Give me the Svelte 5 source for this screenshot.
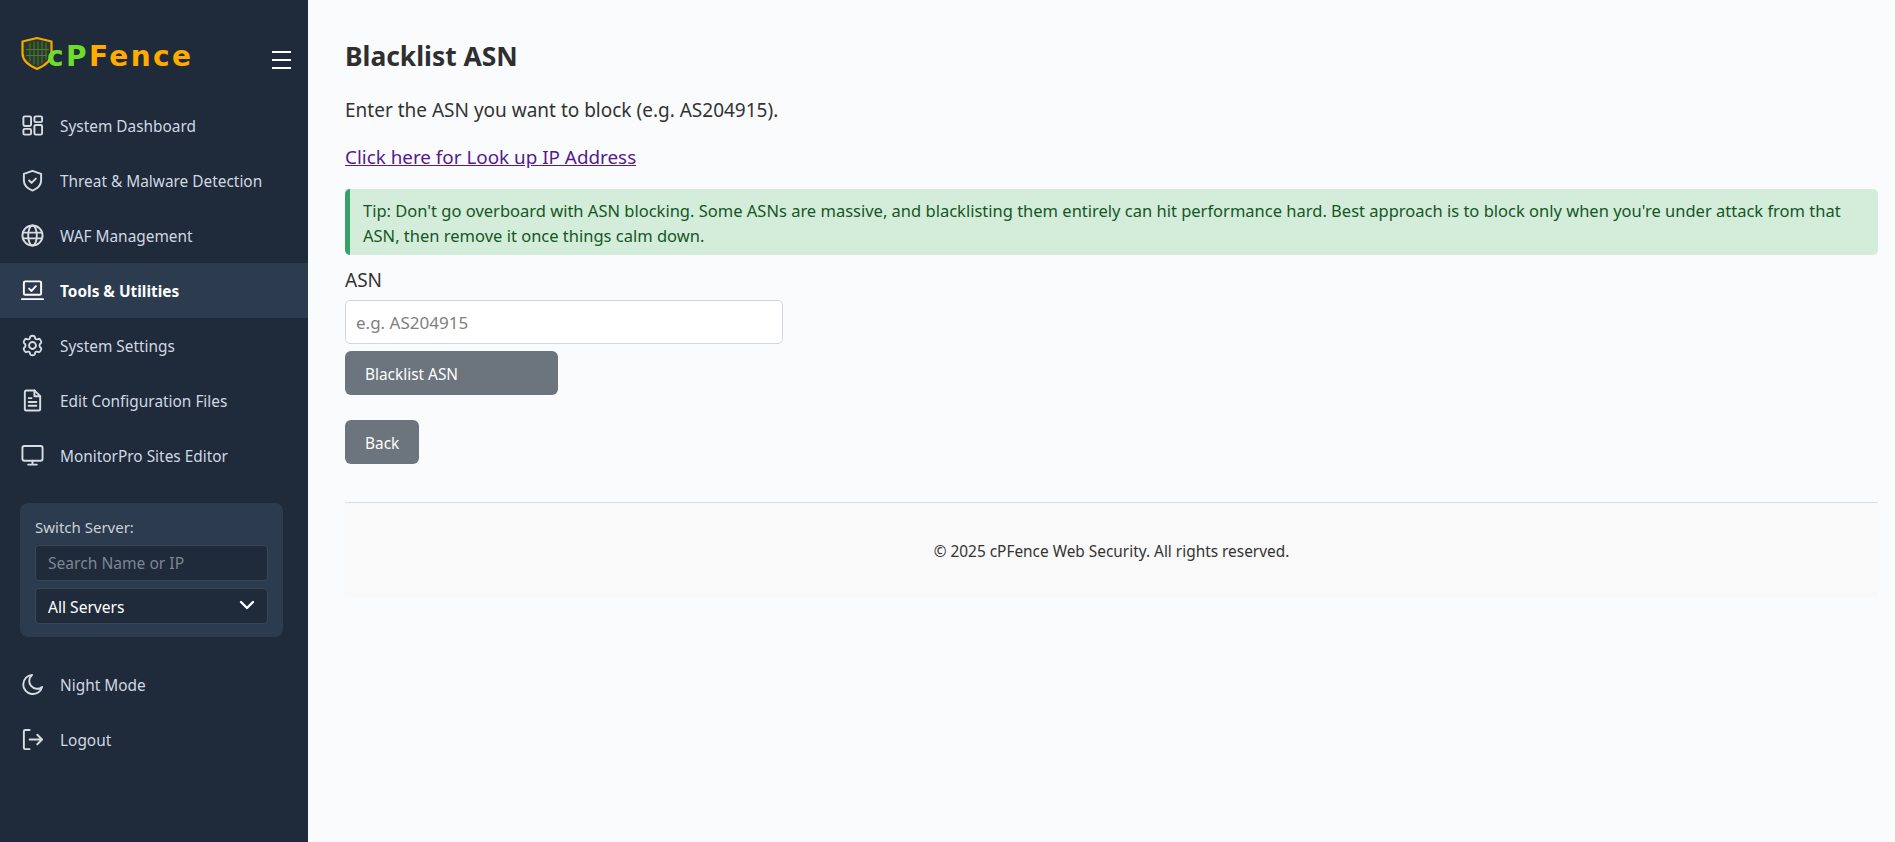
<script>
  const navItems = [
    { label: 'System Dashboard', icon: 'dash' },
    { label: 'Threat & Malware Detection', icon: 'shield' },
    { label: 'WAF Management', icon: 'globe' },
    { label: 'Tools & Utilities', icon: 'laptop', active: true },
    { label: 'System Settings', icon: 'gear' },
    { label: 'Edit Configuration Files', icon: 'file' },
    { label: 'MonitorPro Sites Editor', icon: 'monitor' }
  ];
</script>

{#snippet icon(name)}
  <svg class="nav-icon" viewBox="0 0 24 24" fill="none" stroke="currentColor" stroke-width="2" stroke-linecap="round" stroke-linejoin="round">
    {#if name === 'dash'}
      <rect x="2.5" y="2.5" width="8" height="10" rx="1.5" />
      <rect x="14" y="2.5" width="8" height="6" rx="1.5" />
      <rect x="14" y="11.5" width="8" height="10" rx="1.5" />
      <rect x="2.5" y="15.5" width="8" height="6" rx="1.5" />
    {:else if name === 'shield'}
      <path d="M12 2 L21 5 V12 C21 17 17 20.5 12 22.5 C7 20.5 3 17 3 12 V5 Z" />
      <path d="M8.5 12 L11 14.5 L15.5 10" />
    {:else if name === 'globe'}
      <circle cx="12" cy="12" r="10.5" />
      <path d="M2 9 H22 M2 15 H22" />
      <ellipse cx="12" cy="12" rx="4.5" ry="10.5" />
    {:else if name === 'laptop'}
      <rect x="3" y="2.5" width="18" height="14" rx="1.5" />
      <path d="M1 21 H23" />
      <path d="M8.5 10 L11 12.5 L15.5 7.5" />
    {:else if name === 'gear'}
      <path d="M9.6 2.8 C9.9 1.6 14.1 1.6 14.4 2.8 L14.8 4.6 C15.1 5.1 16.2 5.7 16.8 5.6 L18.6 5 C19.7 4.7 21.8 8.3 21 9.2 L19.7 10.5 C19.4 11 19.4 13 19.7 13.5 L21 14.8 C21.8 15.7 19.7 19.3 18.6 19 L16.8 18.4 C16.2 18.3 15.1 18.9 14.8 19.4 L14.4 21.2 C14.1 22.4 9.9 22.4 9.6 21.2 L9.2 19.4 C8.9 18.9 7.8 18.3 7.2 18.4 L5.4 19 C4.3 19.3 2.2 15.7 3 14.8 L4.3 13.5 C4.6 13 4.6 11 4.3 10.5 L3 9.2 C2.2 8.3 4.3 4.7 5.4 5 L7.2 5.6 C7.8 5.7 8.9 5.1 9.2 4.6 Z" />
      <circle cx="12" cy="12" r="3.6" />
    {:else if name === 'file'}
      <path d="M14 1.5 H5.5 A1.5 1.5 0 0 0 4 3 V21 A1.5 1.5 0 0 0 5.5 22.5 H18.5 A1.5 1.5 0 0 0 20 21 V7.5 Z" />
      <path d="M14 1.5 V7.5 H20" />
      <path d="M8 9.5 H11 M8 13.5 H16 M8 17.5 H16" />
    {:else if name === 'monitor'}
      <rect x="1.5" y="2" width="21" height="15.5" rx="2" />
      <path d="M12 17.5 V21.5 M7.5 21.5 H16.5" />
    {:else if name === 'moon'}
      <path d="M11.5 2 A10 10 0 1 0 22 14.5 A8 8 0 0 1 11.5 2 Z" />
    {:else if name === 'logout'}
      <path d="M9 2 H4.5 A1.5 1.5 0 0 0 3 3.5 V20.5 A1.5 1.5 0 0 0 4.5 22 H9" />
      <path d="M9 12 H22 M17 7 L22 12 L17 17" />
    {/if}
  </svg>
{/snippet}

<div class="layout">
  <aside class="sidebar">
    <div class="brand">
      <div class="logo">
        <svg class="logo-shield" viewBox="0 0 32 34" fill="none">
          <path d="M16 1.5 L30.5 5 V17 C30.5 24 23 29.5 16 32.5 C9 29.5 1.5 24 1.5 17 V5 Z" fill="#2a3a2c" stroke="#f5a800" stroke-width="2.2" stroke-linejoin="round" />
          <path d="M9 6 V25 M13 5 V28 M17 5 V29 M21 5 V27 M25 6 V23 M5 13 H28 M5 19 H26" stroke="#4d7a33" stroke-width="1" />
        </svg>
        <span class="logo-text"><span class="logo-green">cP</span><span class="logo-orange">Fence</span></span>
      </div>
      <button class="burger" aria-label="Toggle menu"><span></span><span></span><span></span></button>
    </div>

    <nav class="nav">
      {#each navItems as item}
        <a href="#top" class="nav-item" class:active={item.active}>
          {@render icon(item.icon)}
          <span class="nav-label">{item.label}</span>
        </a>
      {/each}
    </nav>

    <div class="server-box">
      <label class="server-label" for="server-search">Switch Server:</label>
      <input id="server-search" class="server-input" placeholder="Search Name or IP" />
      <div class="select-wrap">
        <select class="server-select" aria-label="Server">
          <option>All Servers</option>
        </select>
        <svg class="chevron" viewBox="0 0 16 10" fill="none" stroke="#fff" stroke-width="2.4" stroke-linecap="round" stroke-linejoin="round">
          <path d="M2 2 L8 8 L14 2" />
        </svg>
      </div>
    </div>

    <div class="nav bottom">
      <a href="#top" class="nav-item">{@render icon('moon')}<span class="nav-label">Night Mode</span></a>
      <a href="#top" class="nav-item">{@render icon('logout')}<span class="nav-label">Logout</span></a>
    </div>
  </aside>

  <main class="main">
    <h1>Blacklist ASN</h1>
    <p class="intro">Enter the ASN you want to block (e.g. AS204915).</p>
    <p class="link-row"><a href="#top">Click here for Look up IP Address</a></p>
    <div class="tip">
      Tip: Don't go overboard with ASN blocking. Some ASNs are massive, and blacklisting them entirely can hit performance hard. Best approach is to block only when you're under attack from that ASN, then remove it once things calm down.
    </div>
    <label class="field-label" for="asn">ASN</label>
    <input id="asn" class="field" placeholder="e.g. AS204915" />
    <button class="btn submit">Blacklist ASN</button>
    <button class="btn back">Back</button>
    <footer class="footer">© 2025 cPFence Web Security. All rights reserved.</footer>
  </main>
</div>

<style>
  :global(body) {
    margin: 0;
    background: #fafbfd;
    font-family: "Noto Sans", "Open Sans", sans-serif;
    color: #333;
  }

  .layout {
    display: flex;
    min-height: 842px;
  }

  .sidebar {
    width: 308px;
    flex-shrink: 0;
    background: #1f2a3a;
    box-sizing: border-box;
    padding-top: 33px;
  }

  .brand {
    display: flex;
    align-items: flex-start;
    justify-content: space-between;
    padding: 0 17px 0 21px;
    height: 65px;
  }

  .logo {
    display: flex;
    align-items: center;
    height: 40px;
  }

  .logo-shield {
    width: 32px;
    height: 37px;
    flex-shrink: 0;
  }

  .logo-text {
    font-family: "DejaVu Sans", sans-serif;
    font-weight: 700;
    font-size: 28px;
    letter-spacing: 2.4px;
    margin-left: -6px;
    margin-top: 8px;
    line-height: 1;
  }

  .logo-green {
    color: #6fdc2c;
  }

  .logo-orange {
    color: #ffab00;
  }

  .burger {
    background: none;
    border: 0;
    padding: 0;
    margin-top: 18px;
    width: 19px;
    height: 18px;
    display: flex;
    flex-direction: column;
    justify-content: space-between;
  }

  .burger span {
    display: block;
    height: 2px;
    background: #fff;
  }

  .nav {
    display: flex;
    flex-direction: column;
  }

  .nav-item {
    display: flex;
    align-items: center;
    gap: 16px;
    height: 55px;
    padding-left: 21px;
    color: #cfd8e3;
    font-size: 15.4px;
    text-decoration: none;
  }

  .nav-label {
    padding-top: 2px;
  }

  .nav-item.active {
    background: #2d3b4f;
    color: #fff;
    font-weight: 700;
  }

  .nav-icon {
    width: 23px;
    height: 23px;
    color: #d8dde3;
    flex-shrink: 0;
  }

  .nav-item.active .nav-icon {
    color: #fff;
  }

  .server-box {
    margin: 20px 25px 20px 20px;
    background: #2d3b4f;
    border-radius: 8px;
    padding: 14px 15px 13px;
    display: flex;
    flex-direction: column;
    gap: 7px;
  }

  .server-label {
    color: #cbd2da;
    font-size: 15px;
    line-height: 20px;
    margin-bottom: 1px;
  }

  .server-input,
  .server-select {
    width: 100%;
    height: 36px;
    box-sizing: border-box;
    background: #1f2a3a;
    border: 1px solid #3a4656;
    border-radius: 4px;
    padding: 0 12px;
    font-family: inherit;
    font-size: 15.6px;
    color: #fff;
    outline: none;
  }

  .server-input::placeholder {
    color: #7d8692;
  }

  .select-wrap {
    position: relative;
  }

  .server-select {
    appearance: none;
    display: block;
    padding-top: 2px;
  }

  .chevron {
    position: absolute;
    right: 13px;
    top: 12px;
    width: 16px;
    height: 10px;
  }

  .bottom {
    margin-top: 20px;
  }

  .main {
    flex: 1;
    min-width: 0;
    padding: 37px 17px 0 37px;
  }

  h1 {
    margin: 0;
    font-size: 26.4px;
    line-height: 38px;
    font-weight: 700;
    color: #2f2f2f;
  }

  .intro {
    margin: 22px 0 0;
    font-size: 19px;
    line-height: 27px;
  }

  .link-row {
    margin: 20px 0 0;
    font-size: 18.85px;
    line-height: 27px;
  }

  .link-row a {
    color: #551a8b;
  }

  .tip {
    margin-top: 18px;
    background: #d4edda;
    color: #155724;
    border-left: 5px solid #38a169;
    border-radius: 5px;
    padding: 9px 13px 7px;
    font-size: 16.5px;
    line-height: 25px;
  }

  .field-label {
    display: block;
    margin-top: 12px;
    font-size: 19px;
    line-height: 27px;
  }

  .field {
    display: block;
    box-sizing: border-box;
    width: 438px;
    height: 44px;
    margin-top: 6px;
    background: #fff;
    border: 1px solid #d1d5db;
    border-radius: 5px;
    padding: 0 10px;
    font-family: inherit;
    font-size: 17px;
    outline: none;
  }

  .field::placeholder {
    color: #808080;
  }

  .btn {
    display: block;
    height: 44px;
    box-sizing: border-box;
    background: #6c757d;
    color: #fff;
    border: 0;
    border-radius: 6px;
    padding: 2px 20px 0;
    font-family: inherit;
    font-size: 15.4px;
    text-align: left;
  }

  .submit {
    width: 213px;
    margin-top: 7px;
  }

  .back {
    width: 74px;
    margin-top: 25px;
  }

  .footer {
    margin-top: 38px;
    border-top: 1px solid #ddd;
    background: #f9f9f9;
    height: 95px;
    box-sizing: border-box;
    padding-top: 2px;
    display: flex;
    align-items: center;
    justify-content: center;
    font-size: 15.4px;
    color: #333;
  }
</style>
